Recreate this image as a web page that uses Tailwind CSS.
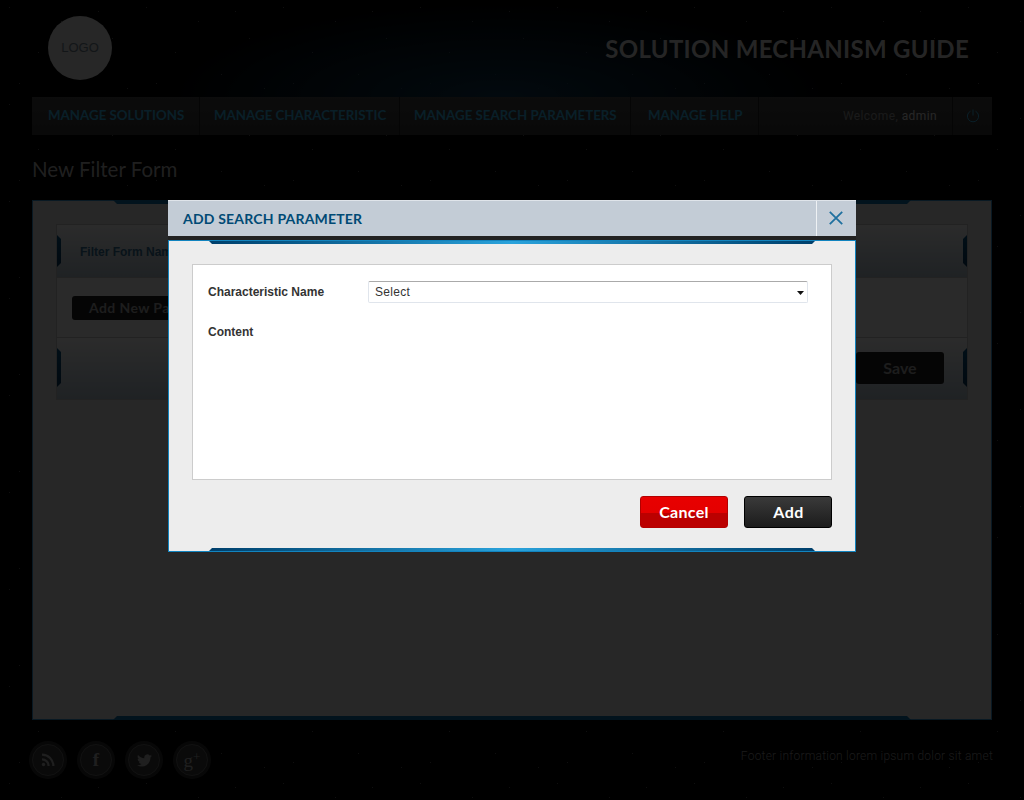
<!doctype html>
<html lang="en">

<head>
  <meta charset="UTF-8" />
  <script src="https://cdn.jsdelivr.net/npm/@tailwindcss/browser@4"></script>
  <meta name="viewport" content="width=device-width, initial-scale=1.0" />
  <title>Solution Mechanism Guide</title>
</head>

<body class="bg-black">
  <div class="relative w-[1024px] h-[800px] overflow-hidden bg-black font-['Liberation_Sans',sans-serif]">

    <!-- star specks -->
    <svg class="absolute inset-0 w-full h-full" aria-hidden="true">
      <defs>
        <pattern id="specks" width="137" height="97" patternUnits="userSpaceOnUse">
          <g fill="#fff" fill-opacity="0.3">
            <rect x="9" y="7" width="1" height="1" /><rect x="38" y="52" width="1" height="1" />
            <rect x="61" y="21" width="1" height="1" /><rect x="84" y="74" width="1" height="1" />
            <rect x="112" y="38" width="1" height="1" /><rect x="127" y="88" width="1" height="1" />
            <rect x="19" y="83" width="1" height="1" /><rect x="98" y="11" width="1" height="1" />
          </g>
        </pattern>
      </defs>
      <rect width="100%" height="100%" fill="url(#specks)" />
    </svg>

    <!-- page under the dialog -->
    <div class="relative px-8">
      <header class="h-[97px] -mx-8 pb-px flex items-center justify-between pl-12 pr-[55px] bg-[radial-gradient(ellipse_340px_97px_at_500px_97px,#0c3048,transparent)]">
        <div class="w-16 h-16 rounded-full bg-[#c0c0c0] flex items-center justify-center text-[13px] text-[#5f6f7a]">LOGO</div>
        <h1 class="pt-px font-['Lato',sans-serif] font-bold text-[24px] tracking-[0.3px] text-[#b8b8b8]">SOLUTION MECHANISM GUIDE</h1>
      </header>

      <nav class="h-[38px] flex items-stretch bg-gradient-to-b from-[#3c3c3c] to-[#2e2e2e] font-['Lato',sans-serif] font-bold text-[13.3px] text-[#2f9ac8]">
        <a class="w-[168px] flex items-center pl-4 pb-px border-r border-[#1a1a1a]">MANAGE SOLUTIONS</a>
        <a class="w-[200px] flex items-center pl-[14px] pb-px border-r border-[#1a1a1a]">MANAGE CHARACTERISTIC</a>
        <a class="w-[231px] flex items-center pl-[14px] pb-px border-r border-[#1a1a1a]">MANAGE SEARCH PARAMETERS</a>
        <a class="w-[128px] flex items-center pl-[17px] pb-px border-r border-[#1a1a1a]">MANAGE HELP</a>
        <div class="flex-1 flex items-center justify-end pr-[15px] border-r border-[#1a1a1a] font-['Roboto',sans-serif] font-normal text-[12px] tracking-[0.4px] text-[#828282]">Welcome,&nbsp;<span class="text-[#c0c0c0]">admin</span></div>
        <div class="w-[39px] flex items-center justify-center">
          <svg width="14" height="14" viewBox="0 0 14 14" fill="none" stroke="#2f9ac8" stroke-width="1">
            <path d="M4.5 2.2a5.6 5.6 0 1 0 5 0" />
            <path d="M7 .5v6" />
          </svg>
        </div>
      </nav>

      <h2 class="h-[65px] pt-[4px] flex items-center font-['Lato',sans-serif] text-[20.5px] text-[#9a9a9a]">New Filter Form</h2>

      <!-- panel -->
      <section class="h-[520px] flex flex-col bg-[#c0c0c0] border border-[#2f7fae]">
        <div class="h-1 -mt-px mx-[80px] bg-[#0b5f90] [clip-path:polygon(4px_100%,0_0,100%_0,calc(100%-4px)_100%)]"></div>
        <div class="mx-[23px] mt-[20px] h-[176px] flex flex-col border border-[#a9a9a9]">
          <div class="h-[53px] flex items-center justify-between bg-gradient-to-b from-[#d7d7d7] to-[#9caab4] border-b border-[#a9a9a9]">
            <div class="w-1 h-[32px] bg-gradient-to-b from-[#084a75] to-[#083050] [clip-path:polygon(0_0,100%_4px,100%_calc(100%-4px),0_100%)]"></div>
            <span class="flex-1 pl-[19px] pt-[2px] text-[12px] font-bold text-[#2d5f80]">Filter Form Name</span>
            <div class="w-1 h-[32px] bg-gradient-to-b from-[#084a75] to-[#083050] [clip-path:polygon(0_4px,100%_0,100%_100%,0_calc(100%-4px))]"></div>
          </div>
          <div class="h-[60px] flex items-center pl-[15px] bg-[#cfcfcf] border-b border-[#a9a9a9]">
            <button class="w-[200px] h-6 rounded-[3px] bg-[#1c1c1c] text-left pl-[17px] font-['Lato',sans-serif] font-bold text-[14px] tracking-[0.4px] text-[#8f8f8f]">Add New Parameter</button>
          </div>
          <div class="flex-1 pb-[2px] flex items-center justify-between bg-gradient-to-b from-[#d7d7d7] to-[#9caab4]">
            <div class="w-1 h-[39px] bg-gradient-to-b from-[#084a75] to-[#083050] [clip-path:polygon(0_0,100%_4px,100%_calc(100%-4px),0_100%)]"></div>
            <button class="ml-auto mr-[19px] w-[88px] h-8 rounded-[3px] bg-[#1c1c1c] font-['Lato',sans-serif] font-bold text-[16px] text-[#8f8f8f]">Save</button>
            <div class="w-1 h-[39px] bg-gradient-to-b from-[#084a75] to-[#083050] [clip-path:polygon(0_4px,100%_0,100%_100%,0_calc(100%-4px))]"></div>
          </div>
        </div>
        <div class="h-1 mt-auto -mb-px mx-[80px] bg-[#0b5f90] [clip-path:polygon(0_100%,4px_0,calc(100%-4px)_0,100%_100%)]"></div>
      </section>

      <footer class="h-[80px] flex items-center justify-between -mr-px">
        <div class="flex gap-4">
          <div class="w-8 h-8 rounded-full bg-[#333] border border-[#555] shadow-[0_0_0_3px_#262626] flex items-center justify-center">
            <svg width="14" height="14" viewBox="0 0 14 14" fill="none" stroke="#999" stroke-width="2.2">
              <circle cx="2.5" cy="11.5" r="1.7" fill="#999" stroke="none" />
              <path d="M1 6.4a6.6 6.6 0 0 1 6.6 6.6" />
              <path d="M1 1.6a11.4 11.4 0 0 1 11.4 11.4" />
            </svg>
          </div>
          <div class="w-8 h-8 rounded-full bg-[#333] border border-[#555] shadow-[0_0_0_3px_#262626] flex items-center justify-center font-['Liberation_Serif',serif] font-bold text-[19px] text-[#999]">f</div>
          <div class="w-8 h-8 rounded-full bg-[#333] border border-[#555] shadow-[0_0_0_3px_#262626] flex items-center justify-center">
            <svg width="15" height="15" viewBox="0 0 24 24" fill="#999">
              <path d="M23.953 4.57a10 10 0 01-2.825.775 4.958 4.958 0 002.163-2.723c-.951.555-2.005.959-3.127 1.184a4.92 4.92 0 00-8.384 4.482C7.69 8.095 4.067 6.13 1.64 3.162a4.822 4.822 0 00-.666 2.475c0 1.71.87 3.213 2.188 4.096a4.904 4.904 0 01-2.228-.616v.06a4.923 4.923 0 003.946 4.827 4.996 4.996 0 01-2.212.085 4.936 4.936 0 004.604 3.417 9.867 9.867 0 01-6.102 2.105c-.39 0-.779-.023-1.17-.067a13.995 13.995 0 007.557 2.209c9.053 0 13.998-7.496 13.998-13.985 0-.21 0-.42-.015-.63A9.935 9.935 0 0024 4.59z" />
            </svg>
          </div>
          <div class="w-8 h-8 rounded-full bg-[#333] border border-[#555] shadow-[0_0_0_3px_#262626] flex items-center justify-center font-['Liberation_Serif',serif] text-[19px] leading-none text-[#999]">g<span class="text-[13px] -mt-2">+</span></div>
        </div>
        <p class="pb-2 font-['Roboto',sans-serif] font-light text-[12px] tracking-[0.22px] text-[#828282]">Footer information lorem ipsum dolor sit amet</p>
      </footer>
    </div>

    <!-- dim layer and dialog -->
    <div class="absolute inset-0 bg-[#000000cc] flex items-start justify-center pt-[200px]">
      <div class="w-[688px] h-[352px] flex flex-col">
        <div class="h-9 flex items-stretch justify-between bg-[#c3ccd6] border-t border-[#dfe4ea]">
          <h3 class="flex items-center pl-[15px] font-['Lato',sans-serif] font-bold text-[14px] tracking-[0.2px] text-[#004a75]">ADD SEARCH PARAMETER</h3>
          <button class="w-[40px] pr-px pb-[2px] flex items-center justify-center border-l border-[#eef1f4]" aria-label="Close">
            <svg width="14" height="14" viewBox="0 0 14 14" fill="none" stroke="#1f709f" stroke-width="1.8">
              <path d="M.8.8l12.4 12.4M13.2.8L.8 13.2" />
            </svg>
          </button>
        </div>
        <div class="h-1 bg-[#222]"></div>
        <div class="flex-1 flex flex-col bg-[#ededed] border border-[#1284bf]">
          <div class="h-[3px] mx-[40px] bg-gradient-to-r from-[#003f6b] via-[#2aa3dc] to-[#003f6b] [clip-path:polygon(3px_100%,0_0,100%_0,calc(100%-3px)_100%)]"></div>
          <div class="mx-[23px] mt-5 h-[216px] bg-white border border-[#cccccc] px-[15px] pt-4">
            <div class="h-[22px] flex items-center">
              <label class="w-[160px] text-[12px] font-bold text-[#333]">Characteristic Name</label>
              <div class="relative w-[440px] h-[22px]">
                <select class="block w-full h-full appearance-none bg-white rounded-[2px] border border-[#e0e5ec] border-t-[#aaaaaa] pl-[6px] text-[12px] tracking-[0.3px] text-[#333] font-['Liberation_Sans',sans-serif]">
                  <option>Select</option>
                </select>
                <svg class="absolute right-[4px] top-[10px]" width="7" height="4" viewBox="0 0 7 4" fill="#111">
                  <path d="M0 0h7L3.5 4z" />
                </svg>
              </div>
            </div>
            <div class="mt-[18px] text-[12px] leading-[22px] font-bold text-[#333]">Content</div>
          </div>
          <div class="mx-[23px] mt-4 flex justify-end gap-4">
            <button class="w-[88px] h-8 pb-px rounded-[3px] border border-[#b30000] bg-[linear-gradient(#e80000_0,#e40000_55%,#bb0000_55%,#bb0000_100%)] font-['Lato',sans-serif] font-bold text-[16px] tracking-[0.3px] text-white">Cancel</button>
            <button class="w-[88px] h-8 pb-px pl-px rounded-[3px] border border-black bg-[linear-gradient(#3a3a3a,#1c1c1c)] font-['Lato',sans-serif] font-bold text-[16px] tracking-[0.5px] text-white">Add</button>
          </div>
          <div class="h-[3px] mt-auto mx-[40px] bg-gradient-to-r from-[#003f6b] via-[#2aa3dc] to-[#003f6b] [clip-path:polygon(0_100%,3px_0,calc(100%-3px)_0,100%_100%)]"></div>
        </div>
      </div>
    </div>
  </div>
</body>

</html>
